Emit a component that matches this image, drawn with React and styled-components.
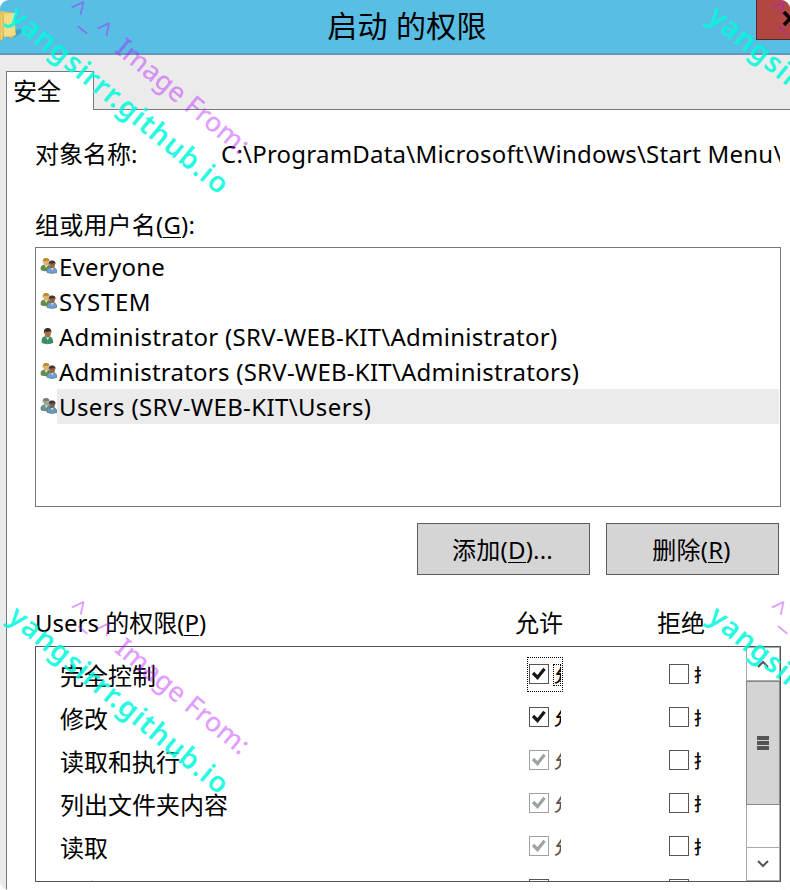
import React from 'react';
import styled, { createGlobalStyle } from 'styled-components';

const Global = createGlobalStyle`
  * { box-sizing: border-box; }
  body { margin: 0; background: #fff; overflow: hidden; }
`;

const Window = styled.main`
  position: relative;
  display: flex;
  flex-direction: column;
  width: 790px;
  height: 890px;
  overflow: hidden;
  border-radius: 9px;
  background: #ebebeb;
  color: #000;
  font-family: 'Noto Sans', 'Noto Sans CJK SC', sans-serif;
  font-size: 24px;
  line-height: 34px;
  white-space: nowrap;
`;

const TitleBar = styled.header`
  display: grid;
  grid-template-columns: 34px 1fr 34px;
  flex: none;
  height: 55px;
  background: #58bee4;
  border-bottom: 2px solid #6298b8;
`;

const FolderIcon = styled.svg`
  width: 26px;
  height: 46px;
`;

const Title = styled.h1`
  margin: 0;
  padding-left: 24px;
  text-align: center;
  font-size: 30px;
  font-weight: 400;
  letter-spacing: 0.3px;
  line-height: 52px;
`;

const CloseButton = styled.button`
  width: 34px;
  height: 40px;
  padding: 0;
  border: solid #4c2c32;
  border-width: 0 0 1px 1px;
  background: #b24640;
  svg { display: block; width: 33px; height: 39px; }
`;

const TabStrip = styled.nav`
  display: flex;
  flex: none;
  height: 55px;
  padding: 16px 0 0 6px;
`;

const Tab = styled.div`
  width: 88px;
  height: 39px;
  padding: 2px 0 0 6px;
  border: solid #767981;
  border-width: 1px 1px 0;
  background: #fff;
`;

const TabRule = styled.div`
  flex: 1;
  border-bottom: 1px solid #767981;
`;

const Panel = styled.section`
  display: flex;
  flex-direction: column;
  flex: 1;
  min-height: 0;
  margin-left: 6px;
  padding: 27px 9px 0 28px;
  border-left: 1px solid #767981;
  background: #fff;
`;

const Text = styled.span`
  display: inline-block;
  letter-spacing: ${({ $track = 0 }) => $track}px;
`;

const ObjectLine = styled.div`
  display: grid;
  grid-template-columns: 186px 559px;
  height: 71px;
  & > * { overflow: hidden; height: 36px; }
`;

const Key = styled.span`
  display: inline-block;
  height: 27px;
  line-height: 27px;
  border-bottom: 1px solid #000;
`;

const GroupLabel = styled.div`
  height: 39px;
  letter-spacing: 0.2px;
`;

const UserList = styled.div`
  flex: none;
  width: 746px;
  height: 260px;
  padding: 1px 1px 0 4px;
  border: 1px solid #73767e;
`;

const UserRow = styled.div`
  display: flex;
  align-items: center;
  height: 35px;
`;

const UserIcon = styled.svg`
  flex: none;
  width: 17px;
  height: 18px;
`;

const UserName = styled.div`
  flex: 1;
  height: 35px;
  padding-left: 2px;
  line-height: 36px;
  background: ${({ $selected }) => ($selected ? '#ebebeb' : 'transparent')};
`;

const Actions = styled.div`
  display: flex;
  justify-content: flex-end;
  gap: 16px;
  flex: none;
  padding: 16px 2px 31px 0;
`;

const ActionButton = styled.button`
  width: 173px;
  height: 52px;
  padding: 2px 2px 0 0;
  border: 1px solid #5c5c5c;
  background: #d5d5d5;
  color: #000;
  font: inherit;
  letter-spacing: 0.2px;
`;

const PermissionHeader = styled.div`
  display: grid;
  grid-template-columns: 480px 142px 1fr;
  flex: none;
  height: 40px;
`;

const PermissionBox = styled.div`
  display: grid;
  grid-template-columns: 1fr 34px;
  flex: none;
  width: 746px;
  height: 236px;
  border: 1px solid #555;
`;

const PermissionList = styled.div`
  overflow: hidden;
  height: 234px;
  padding: 10px 0 0 24px;
`;

const PermissionRow = styled.div`
  display: grid;
  grid-template-columns: 467px 140px 1fr;
  height: 43px;
`;

const PermissionName = styled.div`
  padding-top: 2px;
`;

const CheckCell = styled.div`
  display: flex;
  align-items: flex-start;
  gap: 4px;
  width: 36px;
  height: 35px;
  padding: 7px 0 0 2px;
  outline: ${({ $focused }) => ($focused ? '1px dotted #000' : 'none')};
  outline-offset: -1px;
`;

const CheckBox = styled.svg`
  flex: none;
  width: 20px;
  height: 20px;
  border: 1px solid ${({ $disabled }) => ($disabled ? '#9ca2a6' : '#555')};
  color: ${({ $disabled }) => ($disabled ? '#9ca2a6' : '#181818')};
`;

const Clipped = styled.span`
  overflow: hidden;
  width: ${({ $deny }) => ($deny ? '8px' : '8px')};
  height: 22px;
  padding-left: 1px;
  outline: ${({ $focused }) => ($focused ? '1px dotted #000' : 'none')};
  outline-offset: -1px;
  color: ${({ $disabled }) => ($disabled ? '#555' : '#000')};
  font-size: 18px;
  font-weight: 500;
  line-height: 22px;
`;

const ScrollBar = styled.div`
  display: grid;
  grid-template-rows: 34px 124px 42px 34px;
  border: solid #aaa;
  border-width: 0 1px;
`;

const ScrollArrow = styled.svg`
  width: 32px;
  height: 34px;
  border: solid #aaa;
  border-width: 1px 0;
`;

const Thumb = styled.div`
  display: flex;
  flex-direction: column;
  align-items: center;
  justify-content: center;
  gap: 1px;
  margin: 0 -1px;
  border: 1px solid #888;
  background: #d4d4d4;
`;

const Grip = styled.i`
  width: 12px;
  height: 4px;
  background: #555;
`;

const Watermark = styled.div`
  position: absolute;
  left: ${({ $x }) => $x}px;
  top: ${({ $y }) => $y}px;
  transform: rotate(39.6deg);
  transform-origin: 0 0;
  pointer-events: none;
  font-family: 'Noto Sans', sans-serif;
  line-height: 34px;
`;

const Site = styled.div`
  color: rgba(0, 250, 220, 0.85);
  font-size: 28.5px;
  font-weight: 600;
  letter-spacing: 1.1px;
`;

const Source = styled.div`
  color: rgba(183, 17, 255, 0.42);
  font-size: 27px;
  font-weight: 500;
  letter-spacing: 0;
`;

const Face = styled.span`
  font-weight: 400;
  letter-spacing: 3px;
`;

const Person = ({ x = 0, y = 0, hair, skin, coat }) => (
  <g transform={`translate(${x} ${y})`}>
    <path d="M0 12V9Q1 7 3 7L5 9 7 7Q10 8 10 12Q5 14 0 12Z" fill={coat} stroke="#476b63" strokeWidth=".5" />
    <path d="M4 7L5 10 7 7Z" fill="#eee" />
    <ellipse cx="5.2" cy="4" rx="2.8" ry="3.7" fill={skin} />
    <path d="M1.8 5Q1 0 5 0Q9 0 8.5 4L7.4 2.5Q4 4 3 2.5Z" fill={hair} />
  </g>
);

function Account({ kind }) {
  const muted = kind === 'muted';
  return (
    <UserIcon viewBox="0 0 17 18">
      {kind === 'single' ? (
        <g transform="translate(2 0) scale(1.1 1.22)">
          <Person hair="#342c26" skin="#a96d43" coat="#329466" />
        </g>
      ) : (
        <>
          <Person x={1} y={0} hair={muted ? '#777f77' : '#b68d28'} skin={muted ? '#a5a78f' : '#dfb378'} coat={muted ? '#66958b' : '#61923e'} />
          <Person x={7} y={2.5} hair="#403635" skin={muted ? '#746457' : '#9a613f'} coat={muted ? '#6797b9' : '#709ed4'} />
        </>
      )}
    </UserIcon>
  );
}

function Check({ checked, disabled, focused, deny }) {
  return (
    <CheckCell $focused={focused}>
      <CheckBox viewBox="0 0 18 18" $disabled={disabled}>
        {checked && <path d="M3 8L7.5 12.5 14.5 3.8" fill="none" stroke="currentColor" strokeWidth="3.2" />}
      </CheckBox>
      <Clipped $disabled={disabled} $focused={focused} $deny={deny}>{deny ? '拒绝' : '允许'}</Clipped>
    </CheckCell>
  );
}

const users = [
  ['Everyone', 'group', 0.25],
  ['SYSTEM', 'group', 0.65],
  ['Administrator (SRV-WEB-KIT\\Administrator)', 'single', 0.28],
  ['Administrators (SRV-WEB-KIT\\Administrators)', 'group', 0.24],
  ['Users (SRV-WEB-KIT\\Users)', 'muted', 0.37],
];

const permissions = ['完全控制', '修改', '读取和执行', '列出文件夹内容', '读取', '写入'];
const marks = [[0, 0], [700, 0], [0, 600], [700, 600]];

export default function App() {
  return (
    <>
      <Global />
      <Window>
        <TitleBar>
          <FolderIcon viewBox="0 0 26 46">
            <path d="M4 37L14 38 22 32V29L15 30Z" fill="#318dad" opacity=".55" />
            <path d="M0 11L14 13 16 35 12 38 0 35Z" fill="#e4c65f" />
            <path d="M4 14L15 13V35L4 37Z" fill="#f3dc85" />
            <path d="M0 13L3 15V39L0 41Z" fill="#efd16d" stroke="#c9a54a" strokeWidth=".6" />
          </FolderIcon>
          <Title>启动 的权限</Title>
          <CloseButton aria-label="关闭">
            <svg viewBox="0 0 33 39"><path d="M27 12L39 25M39 12L27 25" stroke="#000" strokeWidth="3.5" /></svg>
          </CloseButton>
        </TitleBar>
        <TabStrip><Tab>安全</Tab><TabRule /></TabStrip>
        <Panel>
          <ObjectLine>
            <div>对象名称:</div>
            <div><Text $track={0.22}>C:\ProgramData\Microsoft\Windows\Start Menu\</Text></div>
          </ObjectLine>
          <GroupLabel>组或用户名(<Key>G</Key>):</GroupLabel>
          <UserList>
            {users.map(([name, kind, track]) => (
              <UserRow key={name}>
                <Account kind={kind} />
                <UserName $selected={kind === 'muted'}><Text $track={track}>{name}</Text></UserName>
              </UserRow>
            ))}
          </UserList>
          <Actions>
            <ActionButton>添加(<Key>D</Key>)...</ActionButton>
            <ActionButton>删除(<Key>R</Key>)</ActionButton>
          </Actions>
          <PermissionHeader>
            <div>Users 的权限(<Key>P</Key>)</div><div>允许</div><div>拒绝</div>
          </PermissionHeader>
          <PermissionBox>
            <PermissionList>
              {permissions.map((name, i) => (
                <PermissionRow key={name}>
                  <PermissionName>{name}</PermissionName>
                  <Check checked focused={i === 0} disabled={i > 1 && i < 5} />
                  <Check deny />
                </PermissionRow>
              ))}
            </PermissionList>
            <ScrollBar>
              <ScrollArrow viewBox="0 0 32 32"><path d="M11 19L16 14 21 19" fill="none" stroke="#555" strokeWidth="2" /></ScrollArrow>
              <Thumb><Grip /><Grip /><Grip /></Thumb>
              <div />
              <ScrollArrow viewBox="0 0 32 32"><path d="M11 13L16 18 21 13" fill="none" stroke="#555" strokeWidth="2" /></ScrollArrow>
            </ScrollBar>
          </PermissionBox>
        </Panel>
        {marks.map(([x, y]) => (
          <React.Fragment key={`${x}-${y}`}>
            <Watermark $x={x + 24} $y={y - 2}><Site>yangsirrr.github.io</Site></Watermark>
            <Watermark $x={x + 83} $y={y - 9}><Source><Face>^_^ </Face>Image From:</Source></Watermark>
          </React.Fragment>
        ))}
      </Window>
    </>
  );
}
